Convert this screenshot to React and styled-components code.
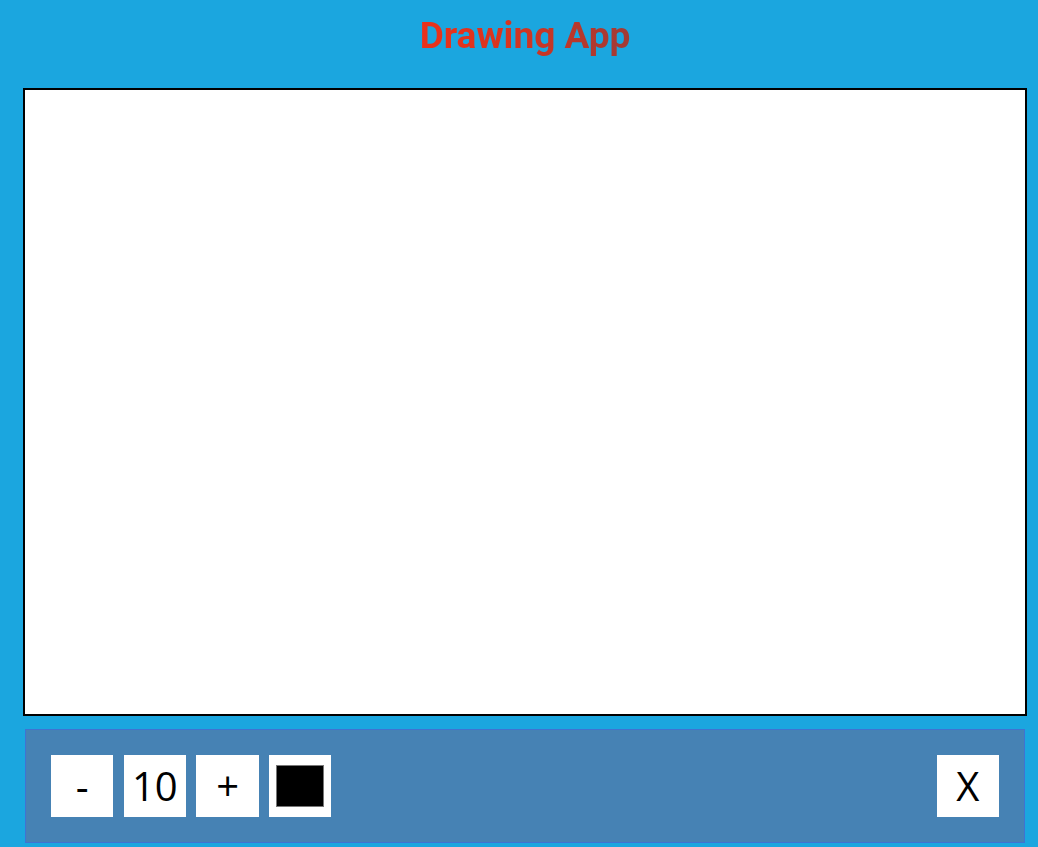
import React, { useState } from 'react';
import styled, { createGlobalStyle } from 'styled-components';

const GlobalStyle = createGlobalStyle`
  html, body {
    margin: 0;
    padding: 0;
    background-color: #1ba6df;
    font-family: 'Open Sans', 'Noto Sans', sans-serif;
  }
`;

const Page = styled.div`
  display: flex;
  flex-direction: column;
  align-items: flex-start;
  padding: 0 0 0 23px;
  min-height: 847px;
  box-sizing: border-box;
`;

const Title = styled.h1`
  margin: 0;
  width: 1004px;
  height: 88px;
  display: flex;
  align-items: center;
  justify-content: center;
  padding-bottom: 18px;
  box-sizing: border-box;

  span {
    font-family: Roboto, 'Liberation Sans', sans-serif;
    font-weight: 700;
    font-size: 37px;
    background: linear-gradient(90deg, #ec311a 0%, #d9341f 40%, #a13a35 100%);
    -webkit-background-clip: text;
    background-clip: text;
    color: transparent;
  }
`;

const Canvas = styled.div`
  width: 1000px;
  height: 624px;
  background-color: #fff;
  border: 2px solid #000;
`;

const Toolbox = styled.div`
  display: flex;
  gap: 10.3px;
  margin: 13px 0 0 2px;
  width: 1000px;
  padding: 25px;
  box-sizing: border-box;
  background-color: steelblue;
  border: 1px solid #3f73d2;

  & > *:last-child {
    margin-left: auto;
  }
`;

const ToolButton = styled.button`
  display: inline-flex;
  align-items: center;
  justify-content: center;
  width: 62.4px;
  height: 62px;
  padding: 0;
  border: none;
  background-color: #fff;
  color: #000;
  font-family: 'Open Sans', 'Noto Sans', sans-serif;
  font-size: 40px;
  line-height: 1;
  cursor: pointer;
`;

const SizeLabel = styled(ToolButton).attrs({ as: 'span' })`
  cursor: default;
`;

const Swatch = styled.span`
  width: 46px;
  height: 40px;
  background-color: ${({ $color }) => $color};
  border: 1px solid #777;
`;

const App = () => {
  const [size, setSize] = useState(10);
  const [color] = useState('#000000');

  return (
    <>
      <GlobalStyle />
      <Page>
        <Title>
          <span>Drawing App</span>
        </Title>
        <Canvas />
        <Toolbox>
          <ToolButton onClick={() => setSize((s) => Math.max(5, s - 5))}>-</ToolButton>
          <SizeLabel>{size}</SizeLabel>
          <ToolButton onClick={() => setSize((s) => Math.min(50, s + 5))}>+</ToolButton>
          <ToolButton>
            <Swatch $color={color} />
          </ToolButton>
          <ToolButton>X</ToolButton>
        </Toolbox>
      </Page>
    </>
  );
};

export default App;
